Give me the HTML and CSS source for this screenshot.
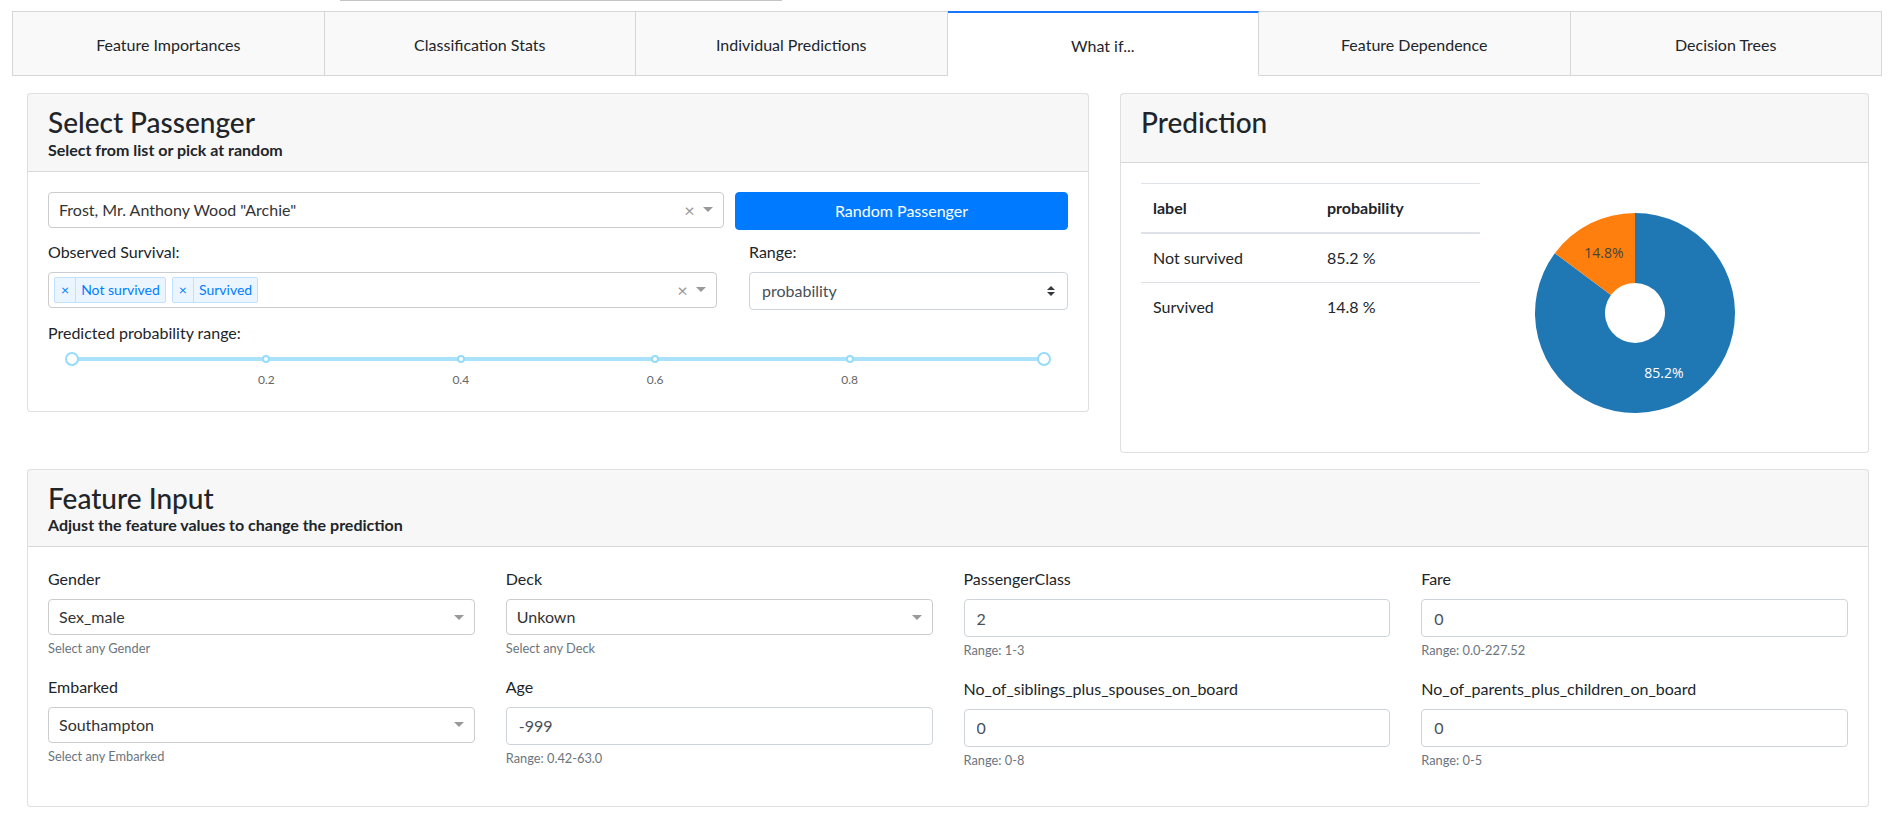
FILE: index.html
```html
<!DOCTYPE html>
<html lang="en">
<head>
<meta charset="utf-8">
<title>What if...</title>
<link rel="stylesheet" href="styles.css">
</head>
<body>
<div class="topstrip"><div class="scrollbar"></div></div>
<nav class="tabs">
  <div class="tab">Feature Importances</div>
  <div class="tab">Classification Stats</div>
  <div class="tab">Individual Predictions</div>
  <div class="tab active">What if...</div>
  <div class="tab">Feature Dependence</div>
  <div class="tab">Decision Trees</div>
</nav>
<main class="main">
  <div class="toprow">
    <section class="card card-select">
      <div class="card-header">
        <h3>Select Passenger</h3>
        <h6>Select from list or pick at random</h6>
      </div>
      <div class="card-body">
        <div class="row1">
          <div class="dd dd-passenger">
            <span class="dd-value">Frost, Mr. Anthony Wood "Archie"</span>
            <span class="dd-clear">×</span>
            <span class="dd-arrow"><span class="caret"></span></span>
          </div>
          <button class="btn-primary">Random Passenger</button>
        </div>
        <div class="row2">
          <div class="col-obs">
            <label class="lbl">Observed Survival:</label>
            <div class="dd dd-multi">
              <span class="tags">
                <span class="tag"><span class="tag-x">×</span><span class="tag-label">Not survived</span></span>
                <span class="tag"><span class="tag-x">×</span><span class="tag-label">Survived</span></span>
              </span>
              <span class="dd-clear">×</span>
              <span class="dd-arrow"><span class="caret"></span></span>
            </div>
          </div>
          <div class="col-range">
            <label class="lbl">Range:</label>
            <div class="custom-select">
              <span>probability</span>
              <svg class="updown" width="8" height="10" viewBox="0 0 4 5"><path fill="#343a40" d="M2 0L0 2h4zm0 5L0 3h4z"/></svg>
            </div>
          </div>
        </div>
        <label class="lbl lbl-slider">Predicted probability range:</label>
        <div class="slider">
          <div class="rail"></div>
          <span class="dot" style="left:20%"></span>
          <span class="dot" style="left:40%"></span>
          <span class="dot" style="left:60%"></span>
          <span class="dot" style="left:80%"></span>
          <span class="handle handle-min"></span>
          <span class="handle handle-max"></span>
          <span class="mark" style="left:20%">0.2</span>
          <span class="mark" style="left:40%">0.4</span>
          <span class="mark" style="left:60%">0.6</span>
          <span class="mark" style="left:80%">0.8</span>
        </div>
      </div>
    </section>

    <section class="card card-pred">
      <div class="card-header">
        <h3>Prediction</h3>
      </div>
      <div class="card-body pred-body">
        <div class="pred-table-col">
          <table class="table">
            <thead>
              <tr><th class="c1">label</th><th>probability</th></tr>
            </thead>
            <tbody>
              <tr><td class="c1">Not survived</td><td>85.2 %</td></tr>
              <tr><td class="c1">Survived</td><td>14.8 %</td></tr>
            </tbody>
          </table>
        </div>
        <div class="pie-col">
          <svg class="pie" width="338" height="249" viewBox="0 0 338 249">
            <path fill="#1f77b4" d="M125,30 A100,100 0 1,1 44.85,70.2 L100.95,112.06 A30,30 0 1,0 125,100 Z"/>
            <path fill="#ff7f0e" d="M125,30 L125,100 A30,30 0 0,0 100.95,112.06 L44.85,70.2 A100,100 0 0,1 125,30 Z"/>
            <text class="pie-txt dark" x="94" y="69">14.8%</text>
            <text class="pie-txt light" x="154" y="189">85.2%</text>
          </svg>
        </div>
      </div>
    </section>
  </div>

  <section class="card card-features">
    <div class="card-header">
      <h3>Feature Input</h3>
      <h6>Adjust the feature values to change the prediction</h6>
    </div>
    <div class="card-body feat-grid">
      <div class="feat-col">
        <div class="form-group">
          <label class="lbl">Gender</label>
          <div class="dd dd-single"><span class="dd-value">Sex_male</span><span class="dd-arrow"><span class="caret"></span></span></div>
          <small class="help">Select any Gender</small>
        </div>
        <div class="form-group">
          <label class="lbl">Embarked</label>
          <div class="dd dd-single"><span class="dd-value">Southampton</span><span class="dd-arrow"><span class="caret"></span></span></div>
          <small class="help">Select any Embarked</small>
        </div>
      </div>
      <div class="feat-col">
        <div class="form-group">
          <label class="lbl">Deck</label>
          <div class="dd dd-single"><span class="dd-value">Unkown</span><span class="dd-arrow"><span class="caret"></span></span></div>
          <small class="help">Select any Deck</small>
        </div>
        <div class="form-group">
          <label class="lbl">Age</label>
          <input class="form-control" type="text" value="-999">
          <small class="help">Range: 0.42-63.0</small>
        </div>
      </div>
      <div class="feat-col">
        <div class="form-group">
          <label class="lbl">PassengerClass</label>
          <input class="form-control" type="text" value="2">
          <small class="help">Range: 1-3</small>
        </div>
        <div class="form-group">
          <label class="lbl">No_of_siblings_plus_spouses_on_board</label>
          <input class="form-control" type="text" value="0">
          <small class="help">Range: 0-8</small>
        </div>
      </div>
      <div class="feat-col">
        <div class="form-group">
          <label class="lbl">Fare</label>
          <input class="form-control" type="text" value="0">
          <small class="help">Range: 0.0-227.52</small>
        </div>
        <div class="form-group">
          <label class="lbl">No_of_parents_plus_children_on_board</label>
          <input class="form-control" type="text" value="0">
          <small class="help">Range: 0-5</small>
        </div>
      </div>
    </div>
  </section>
</main>
</body>
</html>
```

FILE: styles.css
```css
* { box-sizing: border-box; }

body {
  margin: 0;
  font-family: Lato, "Open Sans", "Liberation Sans", sans-serif;
  font-size: 16px;
  line-height: 1.5;
  color: #212529;
  background: #fff;
}

/* top strip */
.topstrip { height: 11px; padding-left: 340px; }
.scrollbar { width: 442px; height: 1px; background: #c4c4c4; }

/* tabs */
.tabs { display: flex; margin: 0 12px; height: 65px; }
.tab {
  flex: 1;
  display: flex;
  align-items: center;
  justify-content: center;
  padding-top: 3px;
  background: #f9f9f9;
  border: 1px solid #d6d6d6;
  border-left: none;
  color: #212529;
}
.tab:first-child { border-left: 1px solid #d6d6d6; }
.tab.active {
  background: #fff;
  border-top: 2px solid #1975fa;
  border-bottom-color: #fff;
}

/* main layout */
.main { padding: 0 25px 0 27px; }
.toprow { display: flex; align-items: flex-start; gap: 31px; margin-top: 17px; }
.card-select { width: 1062px; }
.card-pred { flex: 1; }
.card-features { margin-top: 16px; }

.card {
  background: #fff;
  border: 1px solid rgba(0,0,0,.125);
  border-radius: 4px;
}
.card-header {
  background: rgba(0,0,0,.03);
  border-bottom: 1px solid rgba(0,0,0,.125);
  padding: 12px 20px;
}
.card-pred .card-header { padding-bottom: 22px; }
.card-header h3 { margin: 0; font-size: 28px; font-weight: 500; line-height: 1.2; }
.card-header h6 { margin: 0; font-size: 16px; font-weight: 700; line-height: 1.2; }
.card-body { padding: 20px; }

.lbl { display: block; margin-bottom: 8px; }

/* dropdowns */
.dd {
  display: flex;
  align-items: center;
  height: 36px;
  border: 1px solid #ccc;
  border-radius: 4px;
  background: #fff;
  color: #333;
}
.dd-value { flex: 1; padding-left: 10px; white-space: nowrap; overflow: hidden; }
.dd-clear { width: 17px; text-align: center; color: #999; font-size: 18px; line-height: 1; }
.dd-arrow { width: 25px; padding-right: 5px; display: flex; justify-content: center; align-items: center; }
.caret {
  display: block;
  width: 0; height: 0;
  border-style: solid;
  border-width: 5px 5px 2.5px;
  border-color: #999 transparent transparent;
  margin-top: 2px;
}

.row1 { display: flex; align-items: flex-start; gap: 11px; margin-bottom: 10px; }
.dd-passenger { width: 676px; }
.btn-primary {
  flex: 1;
  height: 38px;
  border: 1px solid #007bff;
  border-radius: 4px;
  background: #007bff;
  color: #fff;
  font: inherit;
  padding: 0;
}

.row2 { display: flex; gap: 32px; margin-bottom: 11px; }
.col-obs { width: 669px; }
.col-range { flex: 1; }

.dd-multi .tags { flex: 1; display: flex; padding-left: 5px; gap: 6px; }
.tag {
  display: inline-flex;
  background: #ebf5ff;
  border: 1px solid #c2e0ff;
  border-radius: 2px;
  color: #007eff;
  font-size: 14px;
  line-height: 1.4;
}
.tag-x { padding: 2px 6px; border-right: 1px solid #c2e0ff; }
.tag-label { padding: 2px 5px; }

.custom-select {
  display: flex;
  align-items: center;
  justify-content: space-between;
  height: 38px;
  border: 1px solid #ced4da;
  border-radius: 4px;
  padding: 0 12px;
  color: #495057;
}

.lbl-slider { margin-bottom: 0; }

/* slider */
.slider { position: relative; height: 46px; margin: 0 24px; }
.rail {
  position: absolute;
  top: 12px; left: 0; right: 0;
  height: 4px;
  border-radius: 2px;
  background: #abe2fb;
}
.dot {
  position: absolute;
  top: 10px;
  width: 8px; height: 8px;
  margin-left: -4px;
  border: 2px solid #96dbfa;
  border-radius: 50%;
  background: #fff;
}
.handle {
  position: absolute;
  top: 7px;
  width: 14px; height: 14px;
  border: 2px solid #96dbfa;
  border-radius: 50%;
  background: #fff;
}
.handle-min { left: -7px; }
.handle-max { right: -7px; }
.mark {
  position: absolute;
  top: 28px;
  transform: translateX(-50%);
  font-size: 12px;
  line-height: 14px;
  color: #666;
}

/* prediction */
.pred-body { display: flex; gap: 30px; align-items: flex-start; }
.pred-table-col { width: 339px; }
.pie-col { flex: 1; }
.pie { display: block; }
.pie-txt { font-family: "Open Sans", sans-serif; font-size: 14px; text-anchor: middle; dominant-baseline: central; }
.pie-txt.dark { fill: #444; }
.pie-txt.light { fill: #fff; }

.table { width: 100%; border-collapse: collapse; color: #212529; }
.table th, .table td {
  padding: 12px;
  border-top: 1px solid #dee2e6;
  text-align: left;
  vertical-align: top;
}
.table thead th { border-bottom: 2px solid #dee2e6; font-weight: 700; }
.table .c1 { width: 174px; }

/* feature grid */
.feat-grid { display: grid; grid-template-columns: repeat(4, 1fr); column-gap: 31px; }
.form-group { margin-bottom: 16px; }
.dd-single { width: 100%; }
.form-control {
  display: block;
  width: 100%;
  height: 38px;
  padding: 6px 12px;
  border: 1px solid #ced4da;
  border-radius: 4px;
  font: inherit;
  color: #495057;
  background: #fff;
}
.help {
  display: block;
  margin-top: 4px;
  font-size: 12.8px;
  line-height: 1.5;
  color: #6c757d;
}
```
